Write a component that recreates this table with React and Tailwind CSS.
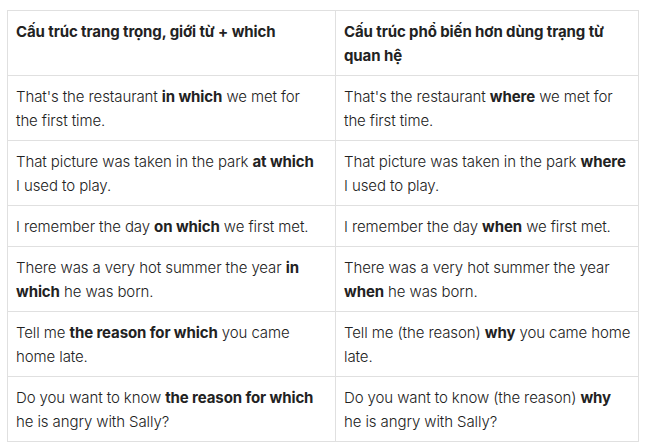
const ROWS = [
  [
    <>That's the restaurant <b>in which</b> we met for the first time.</>,
    <>That's the restaurant <b>where</b> we met for the first time.</>,
  ],
  [
    <>That picture was taken in the park <b>at which</b> I used to play.</>,
    <>That picture was taken in the park <b>where</b> I used to play.</>,
  ],
  [
    <>I remember the day <b>on which</b> we first met.</>,
    <>I remember the day <b>when</b> we first met.</>,
  ],
  [
    <>There was a very hot summer the year <b>in which</b> he was born.</>,
    <>There was a very hot summer the year <b>when</b> he was born.</>,
  ],
  [
    <>Tell me <b>the reason for which</b> you came home late.</>,
    <>Tell me (the reason) <b>why</b> you came home late.</>,
  ],
  [
    <>Do you want to know <b>the reason for which</b> he is angry with Sally?</>,
    <>Do you want to know (the reason) <b>why</b> he is angry with Sally?</>,
  ],
];

// right padding tuned per column so lines wrap where the original does
const CELL = ['pl-2 pr-4', 'pl-2 pr-[6px]'];

export default function App() {
  return (
    <div className="w-[646px] h-[448px] bg-white pt-[10px] pl-[7px] font-['Inter',sans-serif] text-[15px] leading-[24px] tracking-[-0.1px] text-[#222]">
      <table className="w-[631px] table-fixed border-collapse">
        <colgroup>
          <col className="w-[328px]" />
          <col className="w-[303px]" />
        </colgroup>
        <thead>
          <tr>
            {['Cấu trúc trang trọng, giới từ + which', 'Cấu trúc phổ biến hơn dùng trạng từ quan hệ'].map((h, j) => (
              <th key={j} className={`border border-[#e0e0e0] ${CELL[j]} pt-[9px] pb-[7px] text-left align-top font-bold`}>
                {h}
              </th>
            ))}
          </tr>
        </thead>
        <tbody>
          {ROWS.map((row, i) => (
            <tr key={i}>
              {row.map((cell, j) => (
                <td key={j} className={`border border-[#e0e0e0] ${CELL[j]} pt-[9px] pb-[7px] align-top font-light [&_b]:font-bold`}>
                  {cell}
                </td>
              ))}
            </tr>
          ))}
        </tbody>
      </table>
    </div>
  );
}
